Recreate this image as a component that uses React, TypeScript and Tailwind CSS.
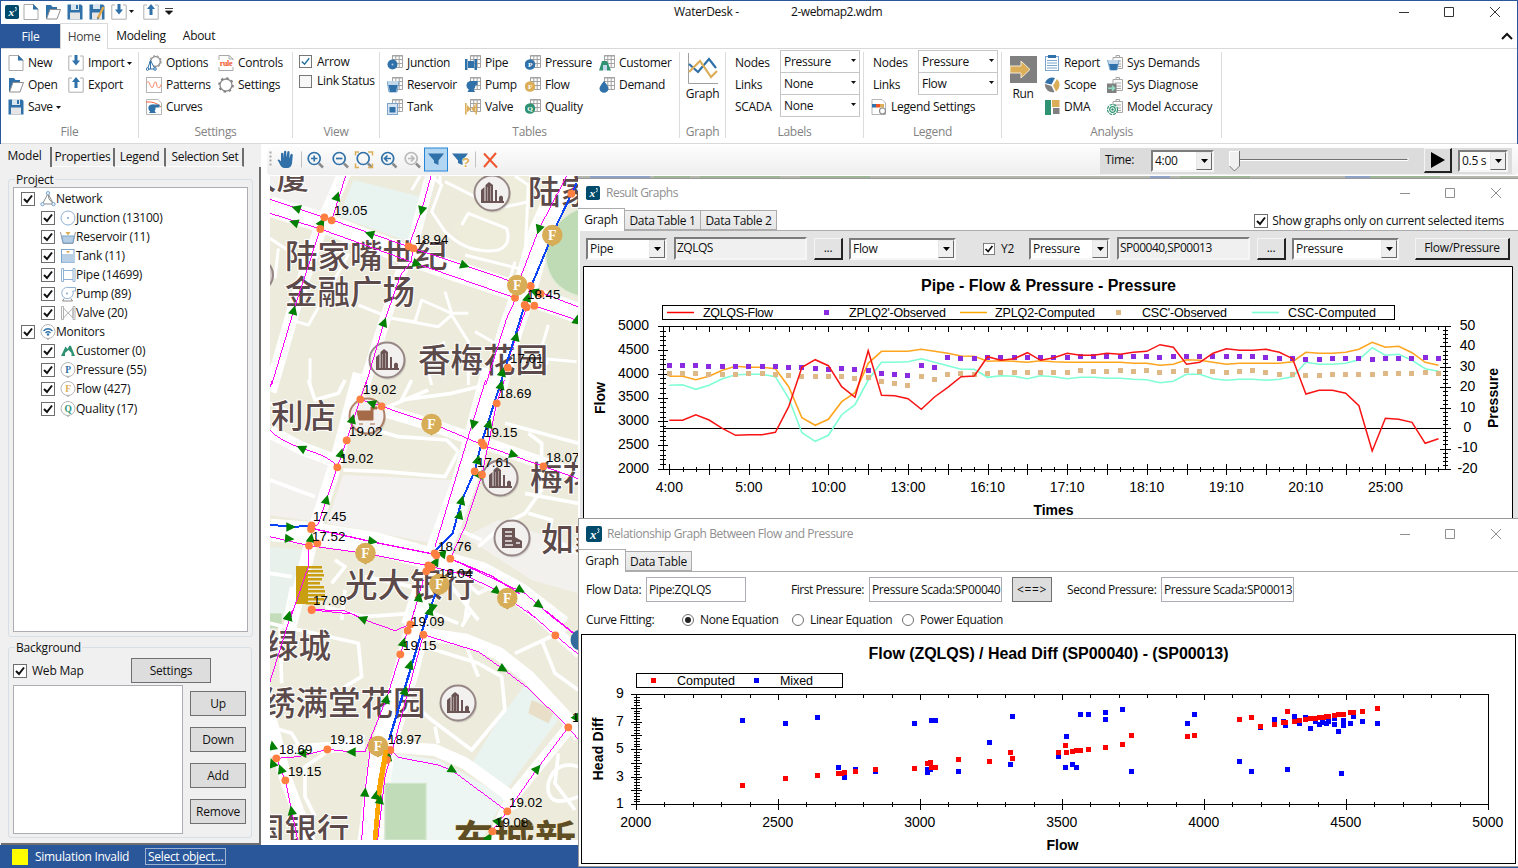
import React from 'react';

type Pt = [number, number];
const BLUE = '#2f71a8';
const GOLD = '#dcae58';
const GREEN = '#2f9272';
const GRAY = '#808080';

/* ---------- icons ---------- */

function Sheet() {
  return (
    <>
      <path d="M1 .5H10.5L15 5V15.5H1Z" fill="#fff" stroke="#a9a9a9" />
      <path d="M10 0L15.5 5.5H10Z" fill={BLUE} />
    </>
  );
}

function GridBack() {
  return <path d="M5.5 .5H15.5V12.5H5.5ZM5.5 4.5H15.5M5.5 8.5H15.5M8.8 .5V12.5M12.2 .5V12.5M5 1H16" fill="none" stroke="#a3a3a3" />;
}

function ClipBack() {
  return <path d="M6 2.5H15.5V13.5H6ZM9 2V.5H12.5V2M8 6H14M8 9H14M8 11.5H14" fill="#fafafa" stroke="#a6a6a6" />;
}

function Letter({ c, fill, color, x = 8, y = 8, r = 7 }: { c: string; fill: string; color: string; x?: number; y?: number; r?: number }) {
  return (
    <>
      <circle cx={x} cy={y} r={r} fill={fill} stroke={fill === '#fff' ? '#b5b5b5' : 'none'} />
      <text x={x} y={y + r * 0.48} fontSize={r * 1.35} textAnchor="middle" fontWeight="bold" fontFamily='"Liberation Serif", serif' fill={color}>
        {c}
      </text>
    </>
  );
}

const ICONS: Record<string, React.ReactNode> = {
  app: (
    <>
      <rect x="0" y="0" width="16" height="16" rx="2" fill="#004b6b" />
      <text x="7" y="12.5" fontSize="13" fontStyle="italic" fontWeight="bold" textAnchor="middle" fontFamily='"Liberation Serif", serif' fill="#fff">x</text>
      <path d="M11.3 3.2Q13 1.8 13.2 3.6Q13 4.5 12.2 4.5Q13.7 5 12.6 6.4L11.2 6.6" fill="none" stroke="#fff" strokeWidth=".9" />
    </>
  ),
  new: <Sheet />,
  open: (
    <>
      <path d="M1 15V1H6L7.5 3H12V6H6L2 15Z" fill={BLUE} />
      <path d="M5 5.5H15.5L12 15H1.5Z" fill="#fff" stroke="#8e8e8e" />
    </>
  ),
  save: (
    <>
      <path d="M.5 .5H14L15.5 2V15.5H.5Z" fill={BLUE} />
      <rect x="4" y="0" width="8" height="6" fill="#dce6ee" />
      <rect x="9" y="1" width="2" height="4" fill={BLUE} />
      <rect x="3" y="8.5" width="10" height="7" fill="#e6e6e6" />
    </>
  ),
  saveas: (
    <>
      <path d="M.5 .5H14L15.5 2V15.5H.5Z" fill={BLUE} />
      <rect x="4" y="0" width="7" height="5" fill="#dce6ee" />
      <rect x="3" y="8.5" width="10" height="7" fill="#e6e6e6" />
      <path d="M14.5 3L9 14" stroke="#e0a84a" strokeWidth="2.4" />
      <path d="M8.6 15.5L8.3 13.2L10 14Z" fill="#444" />
    </>
  ),
  import: (
    <>
      <path d="M4 1H.8V15.2H15.2V1H12" fill="#fff" stroke="#b0b0b0" />
      <path d="M6.5 0H9.5V5.5H12L8 10.5L4 5.5H6.5Z" fill={BLUE} />
    </>
  ),
  export: (
    <>
      <path d="M4 1H.8V15.2H15.2V1H12" fill="#fff" stroke="#b0b0b0" />
      <path d="M6.5 11H9.5V5H12L8 0L4 5H6.5Z" fill={BLUE} />
    </>
  ),
  options: (
    <>
      <circle cx="9.5" cy="6.5" r="4.8" fill="none" stroke="#8b8b8b" strokeWidth="1.3" />
      <circle cx="9.5" cy="6.5" r="5.8" fill="none" stroke="#8b8b8b" strokeDasharray="2 2" />
      <path d="M4.5 5.5L9 14H1.5ZM4.5 5.5V14" fill="#fff" stroke={BLUE} />
      <circle cx="1.5" cy="14" r="1.3" fill="#fff" stroke={BLUE} />
      <circle cx="9" cy="14" r="1.3" fill="#fff" stroke={BLUE} />
    </>
  ),
  gear: (
    <>
      <circle cx="8" cy="8" r="6" fill="none" stroke="#8b8b8b" strokeWidth="1.3" />
      <circle cx="8" cy="8" r="7" fill="none" stroke="#7c7c7c" strokeWidth="1.6" strokeDasharray="2.4 3.1" />
    </>
  ),
  patterns: (
    <>
      <rect x=".5" y=".5" width="15" height="15" fill="#fff" stroke="#b5b5b5" />
      <path d="M.5 6Q2 3 3.500 6Q5 12 7 10Q8.500 4 10 5Q11 11 12.500 11Q14 11 15.500 7" fill="none" stroke="#f58a6c" />
    </>
  ),
  curves: (
    <>
      <path d="M.5 .5H12L15.500 4V15.500H.5Z" fill="#fff" stroke="#b5b5b5" />
      <path d="M0 3Q9 2 15 8" fill="none" stroke="#f0673f" />
      <circle cx="6" cy="9" r="3.600" fill={BLUE} />
      <path d="M6 5.500H13.500V8.500H9ZM3 14L5 11H8L10 14Z" fill={BLUE} />
    </>
  ),
  rule: (
    <>
      <path d="M1 .5H11L15 4V15.500H1Z" fill="#fff" stroke="#a9a9a9" />
      <path d="M11 .5V4H15" fill="none" stroke="#a9a9a9" />
      <rect x="0" y="5" width="16" height="7" fill="#fff" />
      <text x="8" y="11" fontSize="8" fontWeight="bold" textAnchor="middle" fontFamily='"Liberation Serif", serif' fill="#f0552a">rule</text>
    </>
  ),
  tJunction: (<><GridBack /><circle cx="5.500" cy="9.500" r="5" fill={BLUE} /><circle cx="5.500" cy="9.500" r="1" fill="#a9c8e4" /></>),
  tReservoir: (<><GridBack /><path d="M0 4L2 15H10L12 4" fill="#c3d7ea" stroke="#7ba5cc" /><path d="M1.500 8H10.500L9 15H3Z" fill={BLUE} /></>),
  tTank: (<><GridBack /><rect x=".5" y="4.500" width="10" height="11" fill="#d6e3f0" stroke="#7ba5cc" /><rect x="2.500" y="8" width="6" height="5.500" fill={BLUE} /></>),
  tPipe: (<><GridBack /><path d="M0 4H2.500V15H0ZM9.500 4H12V15H9.500ZM3 6H9V13H3Z" fill={BLUE} /></>),
  tPump: (<><GridBack /><circle cx="6" cy="8.500" r="4.500" fill={BLUE} /><path d="M6 4H12.500V8H9ZM2.500 15L4 12H8.500L10 15Z" fill={BLUE} /></>),
  tValve: (<><GridBack /><path d="M.8 4V15.500M11.200 4V15.500" stroke={GOLD} strokeWidth="1.600" /><path d="M2 6L6 10L10 6V13.500L6 10L2 13.500Z" fill={GOLD} /></>),
  tPressure: (<><GridBack /><Letter c="P" fill={BLUE} color="#fff" x={5} y={9.500} r={5.300} /></>),
  tFlow: (<><GridBack /><Letter c="F" fill={GOLD} color="#fff" x={5} y={9.500} r={5.300} /></>),
  tQuality: (<><GridBack /><Letter c="Q" fill={GREEN} color="#fff" x={5} y={9.500} r={5.300} /></>),
  tCustomer: (<><GridBack /><path d="M0 15.500L3 6H8L12 15.500H8V10H4V15.500Z" fill={GREEN} /><rect x="4" y="10" width="4" height="5.500" fill="#c3d7ea" /></>),
  tDemand: (<><GridBack /><path d="M5 4Q0 10 .5 12Q1.500 15.800 5 15.800Q8.500 15.800 9.500 12Q10 10 5 4Z" fill={BLUE} /></>),
  legendset: (
    <>
      <path d="M1 .5H11L14.500 4V15.500H1Z" fill="#fff" stroke="#b5b5b5" />
      <rect x="1" y="5" width="4" height="3.500" fill={BLUE} /><rect x="5" y="5" width="4" height="3.500" fill="#f0552a" /><rect x="9" y="5" width="4" height="3.500" fill={GOLD} />
      <circle cx="11.500" cy="12" r="3" fill="#fff" stroke="#8b8b8b" strokeWidth="1.200" />
    </>
  ),
  report: (
    <>
      <rect x="1.500" y="1.500" width="13" height="14" fill="#fff" stroke="#7ba5cc" />
      <path d="M3 5.500H13M3 8H13M3 10.500H13M3 13H13" stroke="#7ba5cc" />
      <rect x="4" y="0" width="8" height="3" fill={BLUE} />
    </>
  ),
  scope: (
    <>
      <path d="M7.500 7.500L1 6A7.500 7.500 0 0 1 11 1Z" fill={BLUE} />
      <path d="M9 8.500L13 2A8 8 0 0 1 12 14.500Z" fill={GOLD} />
      <path d="M7.500 9L10.500 15A7.500 7.500 0 0 1 1 7Z" fill={GRAY} />
    </>
  ),
  dma: (<><rect x="1" y="1" width="6" height="15" fill={GREEN} /><rect x="8" y="1" width="7.500" height="7" fill={GOLD} /><rect x="9" y="9" width="6.500" height="6" fill={GRAY} /></>),
  sysDem: (<><ClipBack /><path d="M.5 5L3 15H10L12 5" fill="#c3d7ea" stroke="#7ba5cc" /><path d="M2 9H11L9.500 15H3.500Z" fill={BLUE} /></>),
  sysDia: (<><ClipBack /><rect x="0" y="6.500" width="9.500" height="9.500" fill={GRAY} /><path d="M1 11.200H7M5 8.800L7.500 11.200L5 13.600" fill="none" stroke="#8fe0c0" strokeWidth="1.500" /></>),
  accuracy: (<><ClipBack /><circle cx="5.500" cy="10.500" r="5" fill="#fff" stroke={GREEN} strokeWidth="1.200" strokeDasharray="3 1" /><circle cx="5.500" cy="10.500" r="2.800" fill="none" stroke={GREEN} strokeWidth="1.200" /><circle cx="5.500" cy="10.500" r="1.200" fill={GREEN} /></>),
  network: (
    <>
      <path d="M8 2.500L2.500 13H13.500Z" fill="none" stroke="#8b8b8b" />
      <path d="M8 2.500L9 8L13.500 13" fill="none" stroke="#8b8b8b" />
      {[[8, 2.2], [2.5, 13.2], [13.5, 13.2]].map(([x, y]) => <circle key={x} cx={x} cy={y} r="1.700" fill="#e8f0f8" stroke="#7ba5cc" />)}
    </>
  ),
  junction: (<><circle cx="8" cy="8" r="7" fill="#fff" stroke="#8fb2d3" /><circle cx="8" cy="8" r="1" fill="#7ba5cc" /></>),
  reservoir: (<><path d="M.5 3L3 14.500H13L15.500 3" fill="none" stroke="#9a9a9a" /><path d="M1.800 7H14.200L12.800 14H3.200Z" fill="#b3cbe3" stroke="#7ba5cc" /><path d="M5.500 3H10.500L8 6.500Z" fill={GOLD} /></>),
  tank: (<><rect x="1.500" y="1.500" width="12.500" height="13" fill="#fff" stroke="#7ba5cc" /><rect x="2" y="6" width="11.500" height="8.500" fill="#b9cfe6" /><path d="M6 3H10L8 5.500Z" fill={GOLD} /></>),
  pipe: (<path d="M1.500 1.500H3.500V14.500H1.500ZM13 1.500H15V14.500H13ZM3.500 3.500H13M3.500 12.500H13" fill="none" stroke="#8fb2d3" />),
  pump: (<><path d="M9 1.500H15.500V5H12.800A5.700 5.700 0 1 1 9 1.500Z" fill="#fff" stroke="#8fb2d3" /><path d="M4 12.500L2.500 15H12.500L11 12.500" fill="none" stroke="#8b8b8b" /><circle cx="7" cy="7.500" r=".9" fill="#7ba5cc" /></>),
  valve: (<path d="M1.500 1.500H3.500V14.500H1.500ZM13 1.500H15V14.500H13ZM3.500 3L13 13V3L3.500 13Z" fill="none" stroke="#b0b0b0" />),
  monitors: (
    <>
      <path d="M5.500 13.500L8 16L10.500 13.500" fill="#8b8b8b" />
      <circle cx="8" cy="7.500" r="7" fill="#fff" stroke="#b5b5b5" />
      <path d="M3.500 7Q8 2.500 12.500 7M5.500 9Q8 6.500 10.500 9" fill="none" stroke={BLUE} strokeWidth="1.300" /><circle cx="8" cy="10.500" r="1.200" fill={BLUE} />
    </>
  ),
  customer: (<path d="M1 13L5.500 3.500L7.500 6L9.500 2.500L11 3L15 13H11.500V10L8.500 7L5 10V13Z" fill={GREEN} />),
  pressure: (<><path d="M5.500 13.500L8 16L10.500 13.500" fill="#8b8b8b" /><Letter c="P" fill="#fff" color={BLUE} y={7.500} /></>),
  flow: (<><path d="M5.500 13.500L8 16L10.500 13.500" fill="#8b8b8b" /><Letter c="F" fill="#fff" color={GOLD} y={7.500} /></>),
  quality: (<><path d="M5.500 13.500L8 16L10.500 13.500" fill="#8b8b8b" /><Letter c="Q" fill="#fff" color={GREEN} y={7.500} /></>),
};

function Icon({ n, s = 16 }: { n: string; s?: number }) {
  return <svg width={s} height={s} viewBox="0 0 16 16" className="shrink-0">{ICONS[n]}</svg>;
}

function Caret({ c = '' }: { c?: string }) {
  return <svg width="5" height="3" viewBox="0 0 5 3" className={`shrink-0 ${c}`}><path d="M0 0H5L2.500 3Z" fill="#111" /></svg>;
}

function Check({ s = 14, on = true, blue = false }: { s?: number; on?: boolean; blue?: boolean }) {
  return (
    <svg width={s} height={s} viewBox="0 0 14 14" className="shrink-0">
      <rect x=".5" y=".5" width="13" height="13" fill={on ? '#fff' : '#f7f7f7'} stroke="#6e6e6e" />
      {on && <path d="M3 7L6 10L11 3.500" fill="none" stroke={blue ? '#23719c' : '#111'} strokeWidth={blue ? 1.5 : 2} />}
    </svg>
  );
}

/* ---------- ribbon ---------- */

function Cmd({ icon, label, caret }: { icon: string; label: string; caret?: boolean }) {
  return (
    <div className="flex h-[22px] items-center whitespace-nowrap">
      <Icon n={icon} />
      <span className="ml-1">{label}</span>
      {caret && <Caret c="ml-[3px]" />}
    </div>
  );
}

function Group({ label, className, children }: { label: string; className: string; children: React.ReactNode }) {
  return (
    <div className={`flex h-[86px] shrink-0 flex-col justify-between border-r border-[#dcdcdc] ${className}`}>
      <div className="flex h-[66px]">{children}</div>
      <div className="flex h-[12px] items-center justify-center text-[#828282]">{label}</div>
    </div>
  );
}

function Col({ className, items }: { className: string; items: string[][] }) {
  return (
    <div className={`shrink-0 ${className}`}>
      {items.map(([i, l, c]) => <Cmd key={l} icon={i} label={l} caret={!!c} />)}
    </div>
  );
}

function PickList({ values }: { values: string[] }) {
  return (
    <div className="-mt-[2px] w-[80px]">
      {values.map((v, i) => (
        <div key={i} className="-mb-px flex h-[23px] items-center justify-between border border-[#c6c6c6] bg-white pr-[3px] pl-[3px]">
          <span>{v}</span><Caret c="mb-[3px]" />
        </div>
      ))}
    </div>
  );
}

function Names({ names, className }: { names: string[]; className: string }) {
  return <div className={className}>{names.map((n) => <div key={n} className="flex h-[22px] items-center">{n}</div>)}</div>;
}

function Ribbon() {
  return (
    <div className="flex h-[96px] w-full shrink-0 border-t border-b border-[#d9d9d9] pt-[3px]">
      <Group label="File" className="w-[138px]">
        <Col className="w-[61px] pl-[7px]" items={[['new', 'New'], ['open', 'Open'], ['save', 'Save', '1']]} />
        <Col className="w-[70px] pl-[6px]" items={[['import', 'Import', '1'], ['export', 'Export']]} />
      </Group>
      <Group label="Settings" className="w-[154px]">
        <Col className="w-[72px] pl-[7px]" items={[['options', 'Options'], ['patterns', 'Patterns'], ['curves', 'Curves']]} />
        <Col className="pl-[7px]" items={[['rule', 'Controls'], ['gear', 'Settings']]} />
      </Group>
      <Group label="View" className="w-[87px]">
        <div className="pl-[6px]">
          <div className="flex h-[19px] items-center"><Check s={13} blue /><span className="ml-[5px]">Arrow</span></div>
          <div className="flex h-[20px] items-center whitespace-nowrap"><Check s={13} on={false} /><span className="ml-[5px]">Link Status</span></div>
        </div>
      </Group>
      <Group label="Tables" className="w-[300px]">
        <Col className="w-[78px] pl-[7px]" items={[['tJunction', 'Junction'], ['tReservoir', 'Reservoir'], ['tTank', 'Tank']]} />
        <Col className="w-[60px] pl-[7px]" items={[['tPipe', 'Pipe'], ['tPump', 'Pump'], ['tValve', 'Valve']]} />
        <Col className="w-[75px] pl-[7px]" items={[['tPressure', 'Pressure'], ['tFlow', 'Flow'], ['tQuality', 'Quality']]} />
        <Col className="pl-[6px]" items={[['tCustomer', 'Customer'], ['tDemand', 'Demand']]} />
      </Group>
      <Group label="Graph" className="w-[46px]">
        <div className="flex w-full flex-col items-center">
          <svg width="32" height="32" viewBox="0 0 32 32" className="mt-px">
            <path d="M1.500 0V30.500H31" fill="none" stroke="#a0a0a0" />
            <path d="M2 11L11 19L22 6L29 15" fill="none" stroke={BLUE} strokeWidth="2.200" />
            <path d="M2 19L13 8L24 24L30 18" fill="none" stroke={GOLD} strokeWidth="2.200" />
          </svg>
          <span className="mt-px">Graph</span>
        </div>
      </Group>
      <Group label="Labels" className="w-[138px]">
        <Names className="w-[54px] pl-[9px]" names={['Nodes', 'Links', 'SCADA']} />
        <PickList values={['Pressure', 'None', 'None']} />
      </Group>
      <Group label="Legend" className="w-[138px]">
        <div className="flex flex-col">
          <div className="flex h-[44px]">
            <Names className="w-[54px] pl-[9px]" names={['Nodes', 'Links']} />
            <PickList values={['Pressure', 'Flow']} />
          </div>
          <div className="pl-[7px]"><Cmd icon="legendset" label="Legend Settings" /></div>
        </div>
      </Group>
      <Group label="Analysis" className="w-[220px]">
        <div className="flex w-[42px] shrink-0 flex-col items-center pt-[4px]">
          <svg width="27" height="27" viewBox="0 0 27 27">
            <rect width="27" height="27" fill={GRAY} />
            <path d="M0 10H11V5L20 13.500L11 22V17H0Z" fill={GOLD} stroke="#f4ead6" />
          </svg>
          <span className="mt-[3px]">Run</span>
        </div>
        <Col className="w-[63px]" items={[['report', 'Report'], ['scope', 'Scope'], ['dma', 'DMA']]} />
        <Col className="tracking-[-0.2px]" items={[['sysDem', 'Sys Demands'], ['sysDia', 'Sys Diagnose'], ['accuracy', 'Model Accuracy']]} />
      </Group>
    </div>
  );
}

function WinButtons({ color, className }: { color: string; className: string }) {
  return (
    <svg width="104" height="12" viewBox="0 0 104 12" className={className} fill="none" stroke={color}>
      <path d="M1 6.500H11M46.500 1.500H55.500V10.500H46.500ZM92 1L102 11M102 1L92 11" />
    </svg>
  );
}

function TitleArea() {
  return (
    <header className="flex h-[144px] shrink-0 flex-col border-x border-t border-[#2a579a] bg-white">
      <div className="flex h-[22px] shrink-0 items-center">
        <div className="flex w-[673px] shrink-0 items-center pb-px pl-[4px]">
          <Icon n="app" s={14} /><span className="w-[4px]" />
          <Icon n="new" /><span className="w-[6px]" />
          <Icon n="open" /><span className="w-[6px]" />
          <Icon n="save" /><span className="w-[6px]" />
          <Icon n="saveas" /><span className="w-[6px]" />
          <Icon n="import" /><Caret c="ml-[2px]" /><span className="w-[9px]" />
          <Icon n="export" />
          <svg width="8" height="7" viewBox="0 0 8 7" className="ml-[6px]"><path d="M0 .5H8M.5 3H7.500L4 6.500Z" fill="#111" stroke="#111" strokeWidth=".8" /></svg>
        </div>
        <span className="w-[117px] whitespace-nowrap">WaterDesk -</span>
        <span className="whitespace-nowrap tracking-[-0.45px]">2-webmap2.wdm</span>
        <WinButtons color="#333" className="mr-[15px] ml-auto" />
      </div>
      <div className="flex h-[25px] shrink-0 items-end text-[12px]">
        <div className="mt-px flex h-[24px] w-[59px] items-center justify-center self-start bg-[#2a579a] pt-px text-white">File</div>
        <div className="z-10 -mb-px flex h-[26px] w-[48px] items-center justify-center border border-b-0 border-[#d9d9d9] bg-white text-[#444]">Home</div>
        <div className="flex h-[25px] w-[66px] items-center justify-center">Modeling</div>
        <div className="flex h-[25px] w-[50px] items-center justify-center">About</div>
        <svg width="12" height="8" viewBox="0 0 12 8" className="mr-[4px] mb-[8px] ml-auto"><path d="M1 7L6 2L11 7" fill="none" stroke="#111" strokeWidth="2" /></svg>
      </div>
      <Ribbon />
    </header>
  );
}

/* ---------- left panel ---------- */

const TREE: [number, string, string][] = [
  [0, 'network', 'Network'], [1, 'junction', 'Junction (13100)'], [1, 'reservoir', 'Reservoir (11)'], [1, 'tank', 'Tank (11)'],
  [1, 'pipe', 'Pipe (14699)'], [1, 'pump', 'Pump (89)'], [1, 'valve', 'Valve (20)'], [0, 'monitors', 'Monitors'],
  [1, 'customer', 'Customer (0)'], [1, 'pressure', 'Pressure (55)'], [1, 'flow', 'Flow (427)'], [1, 'quality', 'Quality (17)'],
];

function PushButton({ label, className }: { label: string; className: string }) {
  return <button className={`flex h-[25px] items-center justify-center border border-[#707070] bg-[#dddddd] ${className}`}>{label}</button>;
}

function SidePanel() {
  return (
    <aside className="flex h-[701px] w-[261px] shrink-0 flex-col bg-[#f0f0f0] pl-px tracking-[-0.22px]">
      <div className="flex h-[23px] shrink-0 items-end bg-[#f0f0f0]">
        <div className="flex h-[20px] w-[51px] items-start justify-center border-r-2 border-[#6e6e6e] pt-px pr-[2px]">Model</div>
        {[['Properties', 'w-[63px]'], ['Legend', 'w-[51px]'], ['Selection Set', 'w-[78px] pl-[2px] tracking-[-0.35px]']].map(([t, w]) => (
          <div key={t} className={`flex h-[19px] items-center justify-center border-r-2 border-b border-r-[#6e6e6e] border-b-white whitespace-nowrap ${w}`}>{t}</div>
        ))}
      </div>
      <div className="flex flex-1 flex-col border-r-2 border-b-2 border-[#6e6e6e] px-[7px] pt-[5px]">
        <fieldset className="h-[465px] rounded-[3px] border border-[#d5dfe5] px-[4px]">
          <legend className="ml-[2px] h-[15px] px-px leading-[15px]">Project</legend>
          <div className="h-[445px] w-[235px] border border-[#abadb3] bg-white pt-px">
            {TREE.map(([lvl, ic, t]) => (
              <div key={t} className={`flex h-[19.1px] items-center ${lvl ? 'pl-[27px]' : 'pl-[7px]'}`}>
                <Check /><span className="w-[5px]" /><Icon n={ic} /><span className="whitespace-nowrap">{t}</span>
              </div>
            ))}
          </div>
        </fieldset>
        <fieldset className="mt-[3px] h-[198px] rounded-[3px] border border-[#d5dfe5] px-[4px]">
          <legend className="ml-[2px] h-[15px] px-px leading-[15px]">Background</legend>
          <div className="-mt-px flex h-[31px] items-center pt-[2px]">
            <Check /><span className="ml-[5px] w-[99px]">Web Map</span>
            <PushButton label="Settings" className="w-[80px]" />
          </div>
          <div className="flex gap-[7px]">
            <div className="h-[149px] w-[170px] border border-[#abadb3] bg-white" />
            <div className="flex flex-col gap-[11px] pt-[6px]">
              {['Up', 'Down', 'Add', 'Remove'].map((b) => <PushButton key={b} label={b} className="w-[56px]" />)}
            </div>
          </div>
        </fieldset>
      </div>
    </aside>
  );
}

/* ---------- map ---------- */

const arrows: Record<'a' | 'b' | 'c', [number, number, number][]> = {
  a: [[95, 190, 198], [88, 233, 198], [216, 155, -72], [470, 196, 105], [315, 267, 198], [455, 356, 18], [598, 361, 18], [86, 497, -75], [357, 533, -70], [822, 252, 108], [788, 458, -75], [753, 576, -75], [712, 682, -75], [170, 233, -60], [935, 525, -80], [808, 440, 200]],
  b: [[708, 16, -75], [320, 70, 200], [262, 118, -75], [110, 205, 205], [228, 221, -75], [184, 360, -75], [672, 132, -75], [625, 133, 105], [745, 224, 18], [638, 240, -75], [590, 362, -75], [584, 405, -75], [76, 441, 0], [72, 476, 5], [322, 484, 10], [138, 475, -80], [640, 285, 180], [530, 522, 190], [513, 545, -60], [695, 634, 40], [766, 630, 30], [822, 675, 35], [462, 653, -80], [502, 684, 100], [72, 710, -75]],
  c: [[70, 18, -75], [293, 27, 200], [495, 3, -75], [415, 98, -75], [435, 165, -75], [420, 243, -75], [364, 268, -75], [714, 177, 30], [562, 480, 30], [816, 477, -50], [260, 426, 180], [112, 430, 180], [23, 408, -100], [23, 460, -110], [48, 478, -110], [80, 603, -100], [300, 548, -85], [345, 570, -80], [370, 440, -80], [333, 556, -80], [700, 632, -50], [672, 682, -60], [935, 320, -60]],
};

const nodes: Record<'a' | 'b' | 'c', Pt[]> = {
  a: [[178, 217], [200, 226], [166, 252], [431, 304], [445, 310], [919, 146], [797, 423], [827, 446], [750, 458], [779, 480], [785, 487], [808, 482], [728, 668]],
  b: [[286, 58], [350, 79], [245, 181], [217, 262], [695, 70], [650, 187], [656, 196], [629, 274], [651, 284], [835, 259], [140, 436], [138, 447], [157, 490], [132, 497], [509, 520], [514, 526], [556, 536], [490, 556], [500, 562], [484, 574], [140, 688]],
  c: [[140, 0], [436, 43], [428, 62], [475, 74], [406, 133], [871, 76], [910, 352], [187, 418], [34, 445], [61, 511], [376, 420], [366, 450], [727, 604], [682, 664]],
};

const GROUPS: ['a' | 'b' | 'c', number][] = [['a', 145], ['b', 380], ['c', 610]];

const CJK = '"Noto Sans CJK SC", sans-serif';

const places: [string, number, number][] = [
  ['大厦', 244, 189], ['陆家', 528, 204], ['陆家嘴世纪', 285, 268], ['金融广场', 285, 304], ['香梅花园', 418, 372], ['利店', 271, 428],
  ['梅花', 530, 490], ['如家', 541, 551], ['光大银行', 345, 597], ['绿城', 266, 658], ['绣满堂花园', 263, 715], ['国银行', 252, 842],
];

const values: [string, number, number][] = [
  ['19.05', 334, 215], ['18.94', 415, 244], ['18.45', 527, 299], ['17.01', 510, 363], ['19.02', 363, 394], ['18.69', 498, 398], ['19.02', 349, 436],
  ['19.15', 484, 437], ['19.02', 340, 463], ['17.61', 477, 467], ['18.07', 546, 462], ['17.45', 313, 521], ['17.52', 312, 541], ['18.76', 438, 551],
  ['19.04', 439, 578], ['17.09', 313, 605], ['19.09', 411, 626], ['19.15', 403, 650], ['19.18', 330, 744], ['18.97', 388, 744], ['18.69', 279, 754],
  ['19.15', 288, 776], ['19.02', 509, 807], ['19.08', 495, 827], ['1', 572, 722],
];

function Poi({ x, y, kind = 0 }: { x: number; y: number; kind?: number }) {
  const c = kind === 2 ? '#b08068' : '#968786';
  const d = kind === 2 ? '#a56a48' : '#6b5554';
  return (
    <g transform={`translate(${x} ${y})`}>
      <circle r="18" cx="1" cy="1.500" fill="#00000022" />
      <circle r="17.500" fill="#f3f0f0" stroke={c} strokeWidth="2" />
      {kind === 0 && <path d="M-11 9V-3L-7.500 -6V9ZM-6.500 9V-8L-3 -11L1 -8V9ZM3 9V-3H5V9ZM7 9V4Q9 1 11 4V9ZM-11 8H12V10H-11Z" fill={d} />}
      {kind === 0 && <path d="M-4.500 8V-6M-1.500 8V-7" stroke="#b5a6a5" strokeWidth=".8" />}
      {kind === 1 && <path d="M-10 -10H3V-1L10 3V10H-10Z" fill={d} />}
      {kind === 1 && <path d="M-7 -6H0M-7 -2H0M-7 3H0M4 5H8M-7 7H1" stroke="#efeaea" strokeWidth="1.500" />}
      {kind === 2 && <path d="M-10 -5H4V-9H10V-7H6V4H-8ZM-8 8H-4M3 8H8" fill={d} stroke={d} />}
    </g>
  );
}

function MapView() {
  return (
    <svg width="308" height="664" viewBox="270 176 308 664" className="block tracking-normal">
      <rect x="270" y="176" width="308" height="664" fill="#edebdc" />
      <g transform="translate(265 145) scale(.33333)" fill="none" stroke="#fff" strokeLinejoin="round">
        <path d="M15 93H228L190 215L15 165Z" fill="#f2f1f0" stroke="none" />
        <path d="M265 105L468 155L432 290L222 215Z" fill="#e9f3f0" stroke="none" />
        <path d="M720 93H880L770 350L620 330L560 250Z" fill="#eeeddc" stroke="none" />
        <g strokeWidth="12">
          <path d="M500 93L530 120L500 200L540 260Q610 330 700 315Q740 300 725 250L610 205L590 240M440 135L465 93M750 93L790 120L780 340M525 93V118M540 110L640 160L700 190L790 170" strokeWidth="9" />
          <path d="M15 280L90 330M40 310L30 400M120 290L250 330L130 540L60 520M280 480L380 520L450 530L470 465L560 505L540 440M380 520L520 545L560 510L610 590V720M560 505L610 505M630 560L700 600M135 640V720M40 620L20 720M470 640L540 590M500 720L480 640M850 540L820 640L935 650M780 640L850 655M750 350L735 400M600 330L760 370" strokeWidth="9" />
        </g>
        <path d="M15 184L180 235L440 335L760 440L940 505" strokeWidth="62" />
        <path d="M240 80L166 250L90 480L15 740" strokeWidth="40" />
        <path d="M500 80L440 310L405 390L357 533L295 730" strokeWidth="34" />
        <path d="M910 80L828 260L780 430L735 560L685 740" strokeWidth="74" />
        <path d="M945 190Q845 230 842 340Q850 430 945 455Z" fill="#bfdbb5" stroke="#e3ecd9" strokeWidth="5" />
      </g>
      <g transform="translate(265 380) scale(.33333)" fill="none" stroke="#fff" strokeLinejoin="round">
        <path d="M15 165L205 240L150 425L15 405Z" fill="#f3f1ee" stroke="none" />
        <path d="M235 285L560 300L505 490L185 430Z" fill="#f3f2f1" stroke="none" />
        <path d="M15 500L120 510L70 720H15Z" fill="#e9f1ec" stroke="none" />
        <path d="M600 470L700 420L940 500V640L800 600Z" fill="#f3f1ee" stroke="none" />
        <g strokeWidth="11">
          <path d="M370 80L490 30M440 0L410 60L560 40L640 20M300 140L400 170L545 180L580 215L540 290L360 275L235 270M130 0L150 60L220 40L240 0M15 70L60 90M15 300L150 350M720 130L940 190M790 160L830 190V330L780 400L720 430L640 500M780 340L940 370M790 400L860 420L850 460M560 440L650 480M200 610L240 560L210 540M300 590L440 620M560 620L640 720M620 580L600 720M560 570L640 640L720 600M870 480L940 520M240 630L230 720M15 580L80 590" />
          <path d="M80 620L60 720M180 680L300 710L440 700" />
        </g>
        <path d="M15 155L110 205L217 245" strokeWidth="40" />
        <path d="M283 -20L215 240L155 430L135 500L75 740" strokeWidth="40" />
        <path d="M280 60L350 90L500 135L660 190L835 250L945 290" strokeWidth="38" />
        <path d="M15 450L140 460L330 490L510 540L650 580L760 640L890 740" strokeWidth="68" />
        <path d="M688 -30L600 300L510 540L445 740" strokeWidth="76" />
      </g>
      <g transform="translate(265 610) scale(.33333)" fill="none" stroke="#fff" strokeLinejoin="round">
        <path d="M385 430L520 450L720 560L650 690H340Z" fill="#eef6f3" stroke="none" />
        <path d="M780 225L880 330L730 530L615 470L700 330Z" fill="#e9f3ef" stroke="none" />
        <path d="M200 470H300L290 690H150L120 560Z" fill="#ecebdc" stroke="none" />
        <path d="M15 10H50V55H15Z" fill="#c3ddbb" stroke="none" />
        <path d="M800 270L870 300L850 340L790 310Z" fill="#e9dfc8" stroke="none" />
        <g strokeWidth="11">
          <path d="M15 40L60 50L280 100L290 200L240 230M45 50L50 220M15 350L80 370L110 420M420 260L500 330L620 420L720 300L710 200L640 160L480 110M500 430L420 420M590 50L620 0M600 100L640 200M750 130L900 60L790 0M830 90L870 190L940 240M480 0L580 40M110 420L300 380M180 430L120 470V560L150 620M940 470Q870 450 850 520Q840 600 940 560M880 430L870 520L930 600M510 350L520 400" />
        </g>
        <path d="M15 320L60 500L135 700" strokeWidth="38" />
        <path d="M15 425L187 412L300 410" strokeWidth="32" />
        <path d="M475 72L600 90L700 130L790 200L910 330L945 380" strokeWidth="40" />
        <path d="M385 410L510 420L600 460L725 550L745 600" strokeWidth="36" />
        <path d="M915 350L735 570L680 700" strokeWidth="36" />
        <path d="M475 -20L425 180L350 430L315 700" strokeWidth="76" />
        <path d="M360 520H483V690H360Z" fill="#c1dcb9" stroke="#d3e5cd" strokeWidth="4" />
        <path d="M790 -10L945 130" strokeWidth="34" />
      </g>

      <Poi x={492} y={193} /><Poi x={387} y={360} /><Poi x={500} y={478} /><Poi x={512} y={538} kind={1} /><Poi x={458} y={703} /><Poi x={367} y={416} kind={2} />
      <circle cx="257" cy="275" r="16" fill="#d8d0cf" stroke="#968786" strokeWidth="2" />
      <g fill="#c99e10">
        <path d="M296 566H308V604H296Z" />
        {[566, 570, 574, 578, 582, 586, 590, 594, 598, 602].map((y, i) => <rect key={y} x="306" y={y} width={[16, 17, 18, 16, 14, 18, 19, 19, 18, 14][i]} height="2.500" />)}
      </g>
      <g fontFamily={CJK} fontSize="32.500" fontWeight="500" fill="#5b4a49" stroke="#fff" strokeWidth="2" paintOrder="stroke">
        {places.map(([t, x, y]) => <text key={t + y} x={x} y={y}>{t}</text>)}
      </g>
      <text x="453" y="855" fontFamily={CJK} fontSize="41" fontWeight="bold" fill="#5f4e24" stroke="#f5edd0" strokeWidth="1" paintOrder="stroke">东城新</text>

      <g transform="translate(265 145) scale(.33333)" fill="none" stroke="#f0f" strokeWidth="3" shapeRendering="crispEdges">
        <path d="M15 163L178 217L445 310L757 415L940 486M15 205L166 252L455 356L748 458M808 482L940 527M242 93L200 226M178 217L166 252L86 497L20 720M498 93L470 196L431 304L445 310L438 350L407 390L357 533L302 720M905 93L822 252L750 440L748 470L725 520L662 720M930 120L862 270L797 423L785 487L753 576L706 720" />
        <path d="M935 115L875 240L800 420M779 480L705 720" stroke="#0a44f5" strokeWidth="6" />
      </g>
      <g transform="translate(265 380) scale(.33333)" fill="none" stroke="#f0f" strokeWidth="3" shapeRendering="crispEdges">
        <path d="M305 0L286 58L245 181L217 262L160 432L138 447M22 0L15 22M286 58L350 79L500 130L656 196L835 259L940 296M15 150Q40 180 110 205Q200 230 217 262M662 0L610 170L510 500M718 0L695 70L651 284L600 440L556 536M15 470L132 497L300 520L484 556L600 585L697 632L820 720M132 497L130 560L75 720M556 536L650 580L780 640L870 718M475 600L440 720M140 688L240 693L300 718" />
        <path d="M140 445L320 485L509 523M556 536L680 588L765 642" strokeWidth="4" />
        <path d="M710 0L650 187L629 274L590 362L563 460L512 512M512 640L482 720M15 435L90 440L140 438" stroke="#0a44f5" strokeWidth="6" />
      </g>
      <g transform="translate(265 610) scale(.33333)" fill="none" stroke="#f0f" strokeWidth="3" shapeRendering="crispEdges">
        <path d="M82 0L15 215M140 0L260 12L300 30L390 62L436 43L448 0M428 62L406 133L364 268L300 425L262 426L187 418L100 440L34 445L61 511L98 690M320 380L300 548L290 690M475 74L640 125L714 177L790 235L910 352L940 388M910 352L816 477L727 604L660 690M376 420L400 442L520 465L562 482L727 604M785 0L871 76L940 133M475 74L385 410L360 500L338 690" />
        <path d="M838 0L945 85" strokeWidth="5" />
        <path d="M490 0L445 150L372 390" stroke="#0a44f5" strokeWidth="7" />
        <path d="M363 420L345 520L330 690" stroke="#ffa500" strokeWidth="14" />
      </g>
      {GROUPS.map(([k, oy]) => (
        <g key={k}>
          {arrows[k].map(([x, y, r], i) => <path key={i} d="M5.500 0L-4 4.700V-4.700Z" fill="#008000" transform={`translate(${265 + x / 3} ${oy + y / 3}) rotate(${r})`} />)}
          {nodes[k].map(([x, y], i) => <circle key={i} cx={265 + x / 3} cy={oy + y / 3} r="3.900" fill="#ff7f41" />)}
        </g>
      ))}
      <circle cx="581" cy="640" r="10.500" fill="#336a9c" />
      {[[552.3, 235], [517.3, 285], [431.5, 424], [365.5, 553], [439.3, 584], [507.3, 598], [378, 746]].map(([x, y]) => (
        <g key={x}>
          <path d={`M${x - 3} ${y + 9}L${x} ${y + 11.5}L${x + 3} ${y + 9}Z`} fill="#c39a48" />
          <Letter c="F" fill="#d8ad57" color="#fff" x={x} y={y} r={10.3} />
        </g>
      ))}
      <path d="M386 750L384 765L379 795" fill="none" stroke="#ffa500" strokeWidth="4.500" />
      <g fontFamily='"Liberation Sans", sans-serif' fontSize="13.300" fill="#000">
        {values.map(([t, x, y], i) => <text key={i} x={x} y={y}>{t}</text>)}
      </g>
    </svg>
  );
}

function Mag({ sign, color = BLUE, x }: { sign: string; color?: string; x: number }) {
  return (
    <g transform={`translate(${x} 12)`} fill="none" stroke={color} strokeWidth="1.700">
      <path d="M4 4L8 8" stroke="#8b8b8b" strokeWidth="2.500" />
      <circle cx="-.8" cy="-1" r="6" />
      <path d={sign} />
    </g>
  );
}

function MapTools() {
  return (
    <svg width="240" height="28" viewBox="267 147.500 240 28" className="block">
      <g transform="translate(0 148)">
        <path d="M270.500 4V20" stroke="#a8a8a8" strokeWidth="2" strokeDasharray="2 2" />
        <path d="M301.500 4V20M475.500 4V20" stroke="#c2c2c2" />
        <path d="M281 12V6Q282 4.500 283.300 6V11L284 4Q285.200 2.500 286.300 4V10L287.500 4Q288.800 3 289.600 4.500L289.300 11L290.500 7Q292 5.500 292.800 7.500L292 16Q291 20 288 20.500H284Q281 20 279 15L277.500 12.500Q279 11 281 14Z" fill={BLUE} />
        <Mag x={315} sign="M-4 -1H2.400M-.8 -4V2" />
        <Mag x={340} sign="M-4 -1H2.400" />
        <Mag x={364} sign="" />
        <path d="M355.500 8V4.500H359M368 4.500H372.500V8M355.500 16V20H359M368 20H372.500V16" fill="none" stroke={GOLD} strokeWidth="1.500" />
        <Mag x={388.500} sign="M2.500 -1H-3M-1 -4L-4 -1L-1 2" />
        <Mag x={412} sign="M-4 -1H1M-1 -4L2 -1L-1 2" color="#b9b9b9" />
        <rect x="424.500" y=".5" width="23" height="23" fill="#b3d7f3" stroke="#2585d6" />
        <path d="M428 6H444L438.500 13V17.500L434 15.500V13Z" fill={BLUE} />
        <path d="M452 6H468L462.500 13V17.500L458 15.500V13Z" fill={BLUE} />
        <text x="462" y="19" fontSize="13" fontWeight="bold" fill={GOLD} stroke="#fff" strokeWidth="1" paintOrder="stroke" fontFamily='"Liberation Sans", sans-serif'>?</text>
        <path d="M484 6L497 20M496 5.500L484 19.500" stroke="#ee5730" strokeWidth="2" fill="none" />
      </g>
    </svg>
  );
}

/* ---------- classic controls ---------- */

const SUNK = 'border-2 border-t-[#7c7c7c] border-l-[#7c7c7c] border-r-[#f6f6f6] border-b-[#f6f6f6]';
const RAISED = 'border border-b-2 border-r-2 border-t-[#f4f4f4] border-l-[#f4f4f4] border-r-[#222] border-b-[#222]';

function Combo({ v, className }: { v: string; className: string }) {
  return (
    <div className={`flex h-[22px] shrink-0 items-center bg-white pl-[2px] ${SUNK} ${className}`}>
      <span className="flex-1 whitespace-nowrap">{v}</span>
      <span className="flex h-[18px] w-[16px] items-center justify-center border border-t-[#e8e8e8] border-r-[#696969] border-b-[#696969] border-l-[#e8e8e8] bg-[#efefef]">
        <svg width="7" height="4" viewBox="0 0 7 4"><path d="M0 0H7L3.500 4Z" /></svg>
      </span>
    </div>
  );
}

function TimeBar() {
  return (
    <div className="flex h-[26px] w-[412px] items-center bg-[#dcdcdc] pl-[5px]">
      <span className="w-[46px] pb-[2px]">Time:</span>
      <Combo v="4:00" className="w-[63px]" />
      <svg width="200" height="24" viewBox="0 0 200 24" className="ml-[10px]">
        <path d="M14 10.500H184" stroke="#707070" /><path d="M14 11.500H184V9" stroke="#fff" fill="none" />
        <path d="M5.500 2.500H15.500V17L10.500 22L5.500 17Z" fill="#f0f0f0" stroke="#fff" /><path d="M15.500 2V17L10.500 22L5.500 17" fill="none" stroke="#707070" />
      </svg>
      <div className={`flex h-[25px] w-[28px] items-center justify-center bg-[#dcdcdc] ${RAISED}`}>
        <svg width="14" height="16" viewBox="0 0 14 16"><path d="M0 0L14 8L0 16Z" /></svg>
      </div>
      <Combo v="0.5 s" className="ml-[6px] w-[50px]" />
    </div>
  );
}

function Tab({ t, on, className }: { t: string; on?: boolean; className: string }) {
  return (
    <div className={`flex items-center justify-center border border-[#acacac] whitespace-nowrap ${on ? 'z-10 -mb-px h-[23px] border-b-0 bg-white' : '-ml-px h-[20px] bg-gradient-to-b from-[#f0f0f0] to-[#e5e5e5] pt-px'} ${className}`}>{t}</div>
  );
}

/* ---------- charts ---------- */

const X0 = 669.3;
const DX = 13.262;
const flow = [721, 721, 704, 720, 745, 766, 764, 764, 757, 680, 562, 539, 557, 620, 652, 512, 646, 647, 656, 688, 651, 622, 590, 588, 530, 541, 536, 518, 541, 533, 520, 526, 526, 520, 523, 517, 514, 494, 502, 553, 547, 520, 506, 511, 511, 508, 517, 536, 642, 631, 631, 640, 677, 813, 715, 718, 727, 790, 776];
const zplqC = [589, 589, 599, 589, 571, 559, 562, 562, 566, 620, 713, 736, 718, 665, 638, 550, 514, 514, 514, 508, 514, 520, 528, 529, 544, 542, 544, 547, 542, 545, 547, 547, 547, 547, 547, 550, 550, 556, 553, 539, 541, 547, 553, 550, 550, 550, 550, 545, 517, 520, 520, 517, 508, 487, 502, 499, 518, 547, 556];
const cscC = [616, 614, 628, 616, 596, 584, 583, 583, 590, 655, 758, 784, 766, 704, 674, 600, 547, 547, 545, 536, 547, 557, 568, 568, 592, 587, 589, 596, 587, 590, 596, 592, 592, 595, 595, 598, 599, 608, 604, 583, 583, 596, 601, 598, 598, 601, 598, 590, 547, 553, 553, 550, 539, 503, 526, 523, 541, 566, 574];
const zplqO = [557, 557, 557, 560, 560, 560, 560, 560, 560, 563, 563, 565, 569, 565, 568, 572, 580, 583, 586, 557, 563, 532, 535, 535, 532, 532, 532, 532, 532, 532, 532, 529, 529, 529, 529, 529, 529, 532, 529, 529, 529, 529, 529, 529, 529, 532, 535, 535, 538, 538, 535, 535, 535, 538, 535, 535, 535, 532, 535];
const cscO = [580, 580, 580, 583, 583, 583, 580, 580, 584, 586, 589, 589, 589, 589, 595, 592, 604, 610, 616, 589, 598, 583, 580, 583, 580, 577, 577, 577, 577, 577, 577, 571, 574, 574, 571, 574, 571, 577, 574, 571, 574, 574, 577, 574, 571, 577, 583, 583, 586, 586, 583, 583, 583, 583, 580, 580, 580, 577, 580];

const line = (d: number[]) => d.map((y, i) => `${i ? 'L' : 'M'}${(X0 + i * DX).toFixed(1)} ${(180 + y / 3).toFixed(1)}`).join('');
const range = (n: number) => Array.from({ length: n }, (_, i) => i);

function Dots({ d, c }: { d: number[]; c: string }) {
  return <g fill={c} shapeRendering="crispEdges">{d.map((y, i) => <rect key={i} x={Math.round(X0 + i * DX - 2.6)} y={Math.round(180 + y / 3 - 2.5)} width="5" height="5" />)}</g>;
}

function Label({ x, y, t, w, anchor = 'start', size = 14, bold = false }: { x: number; y: number; t: string; w?: number; anchor?: 'start' | 'middle' | 'end'; size?: number; bold?: boolean }) {
  return <text x={x} y={y} fontSize={size} textAnchor={anchor} fontWeight={bold ? 'bold' : 'normal'} textLength={w}>{t}</text>;
}

function FlowChart() {
  const ticks = range(59).map((i) => {
    const x = Math.round(X0 + i * DX) + 0.5;
    const m = i % 3 === 0;
    return `M${x} 326V${m ? 332 : 330}M${x} ${m ? 464 : 467}V${m ? 475 : 472}`;
  }).join('');
  const left = range(31).map((i) => {
    const y = Math.round(326 + i * 4.767) + 0.5;
    return i % 5 ? `M660 ${y}H666` : `M658 ${y}H668`;
  }).join('');
  const right = range(36).map((i) => {
    const y = Math.round(326 + i * 4.086) + 0.5;
    return i % 5 ? `M1443 ${y}H1448` : `M1440 ${y}H1451`;
  }).join('');
  return (
    <svg width="930" height="252" viewBox="583 266 930 252" className="block bg-white tracking-normal" fontFamily='"Liberation Sans", sans-serif'>
      <path d="M583.500 518V266.500H1512.500V518" fill="none" stroke="#000" />
      <Label x={1048.500} y={291} t="Pipe - Flow & Pressure - Pressure" anchor="middle" size={16} bold w={255} />
      <rect x="662.500" y="305.500" width="732" height="14" fill="#fff" stroke="#000" />
      <path d="M667 312.500H694" stroke="red" strokeWidth="1.500" />
      <path d="M960 312.500H987" stroke="orange" strokeWidth="1.500" />
      <path d="M1252 312.500H1279" stroke="#7fffd4" strokeWidth="1.700" />
      <rect x="824" y="310" width="5" height="5" fill="#8a2be2" /><rect x="1116" y="310" width="5" height="5" fill="#deb887" />
      <Label x={703} y={317} t="ZQLQS-Flow" size={12.500} w={70} />
      <Label x={849} y={317} t="ZPLQ2'-Observed" size={12.500} w={97} />
      <Label x={995} y={317} t="ZPLQ2-Computed" size={12.500} w={100} />
      <Label x={1142} y={317} t="CSC'-Observed" size={12.500} w={85} />
      <Label x={1288} y={317} t="CSC-Computed" size={12.500} w={88} />
      <path d={`M658 326.500H1451M658 469.500H1451M663.500 326V470M1445.500 326V470M663 428.500H1446${ticks}${left}${right}`} fill="none" stroke="#000" shapeRendering="crispEdges" />
      <path d={line(cscC)} fill="none" stroke="#7fffd4" strokeWidth="1.600" />
      <path d={line(zplqC)} fill="none" stroke="#ffa51f" strokeWidth="1.600" />
      <Dots d={cscO} c="#deb887" />
      <Dots d={zplqO} c="#8a2be2" />
      <path d={line(flow)} fill="none" stroke="#f91414" strokeWidth="1.500" />
      {range(7).map((i) => <Label key={i} x={649} y={330 + i * 23.83} t={String(5000 - i * 500)} anchor="end" w={31} />)}
      {range(8).map((i) => <Label key={i} x={1467.500} y={330 + i * 20.4} t={String(50 - i * 10)} anchor="middle" size={14} />)}
      {['4:00', '5:00', '10:00', '13:00', '16:10', '17:10', '18:10', '19:10', '20:10', '25:00'].map((t, i) => <Label key={t} x={669.3 + i * 79.57} y={492} t={t} anchor="middle" />)}
      <Label x={1053.500} y={515} t="Times" anchor="middle" size={14} bold />
      <text transform="translate(605 398) rotate(-90)" fontSize="14" fontWeight="bold" textAnchor="middle">Flow</text>
      <text transform="translate(1498 398) rotate(-90)" fontSize="14" fontWeight="bold" textAnchor="middle" textLength="60">Pressure</text>
    </svg>
  );
}

const blueL: Pt[] = [[493, 607], [622, 616], [718, 598], [781, 748], [799, 778], [832, 754], [892, 760], [1009, 616], [1060, 607], [1072, 607], [1048, 754], [1048, 763], [1057, 754], [1141, 760], [1234, 673], [1303, 595], [1297, 739]];
const redL: Pt[] = [[493, 802], [622, 781], [718, 772], [781, 766], [790, 765], [799, 763], [832, 760], [892, 754], [1009, 751], [1048, 736], [1057, 733], [1060, 748], [1072, 748], [1141, 724], [1234, 730], [1297, 703], [1303, 721]];
const blueR: Pt[] = [[55, 715], [79, 655], [76, 748], [97, 739], [109, 748], [121, 589], [145, 589], [196, 583], [196, 604], [247, 574], [274, 760], [442, 616], [463, 589], [598, 730], [634, 760], [661, 628], [703, 604], [730, 610], [736, 622], [742, 754], [763, 595], [778, 616], [796, 598], [811, 631], [826, 610], [838, 619], [847, 613], [858, 616], [865, 611], [883, 600], [883, 619], [895, 640], [904, 766], [910, 607], [910, 622], [931, 616], [940, 595], [967, 610], [1012, 616]];
const redR: Pt[] = [[55, 703], [76, 682], [79, 703], [97, 700], [109, 697], [121, 697], [145, 694], [196, 688], [247, 679], [274, 652], [442, 655], [463, 652], [598, 604], [634, 598], [661, 625], [703, 619], [730, 613], [736, 613], [742, 580], [763, 610], [778, 607], [796, 604], [811, 601], [826, 601], [838, 598], [850, 598], [858, 595], [865, 595], [883, 592], [895, 589], [910, 588], [931, 583], [940, 583], [967, 580], [1012, 571]];

function Scatter({ d, ox, c }: { d: Pt[]; ox: number; c: string }) {
  return <g fill={c} shapeRendering="crispEdges">{d.map(([x, y], i) => <rect key={i} x={Math.round(ox + x / 3 - 2.5)} y={Math.round(518 + y / 3 - 2.5)} width="5" height="5" />)}</g>;
}

function RelationChart() {
  const bottom = range(31).map((i) => {
    const x = Math.round(636 + i * 28.4) + 0.5;
    const m = i % 5 === 0;
    return `M${x} 694V${m ? 700 : 698}M${x} ${m ? 799 : 802}V${m ? 810 : 807}`;
  }).join('');
  const left = range(41).map((i) => {
    const y = Math.round(694 + i * 2.75) + 0.5;
    return i % 5 ? `M634 ${y}H640` : `M631 ${y}H642`;
  }).join('');
  return (
    <svg width="935" height="230" viewBox="581 634 935 230" className="block bg-white tracking-normal" fontFamily='"Liberation Sans", sans-serif'>
      <rect x="581.500" y="634.500" width="934" height="229" fill="none" stroke="#000" />
      <Label x={1048.500} y={659} t="Flow (ZQLQS) / Head Diff (SP00040) - (SP00013)" anchor="middle" size={16} bold w={360} />
      <rect x="636.500" y="673.500" width="206" height="14" fill="#fff" stroke="#000" />
      <rect x="651" y="678" width="5" height="5" fill="red" /><rect x="754" y="678" width="5" height="5" fill="blue" />
      <Label x={677} y={685} t="Computed" size={12.500} w={58} /><Label x={780} y={685} t="Mixed" size={12.500} w={33} />
      <path d={`M631 694.500H1488.500V810M631 804.500H1488M636.500 694V805${bottom}${left}`} fill="none" stroke="#000" shapeRendering="crispEdges" />
      <Scatter d={blueL} ox={578} c="blue" /><Scatter d={blueR} ox={1040} c="blue" />
      <Scatter d={redL} ox={578} c="red" /><Scatter d={redR} ox={1040} c="red" />
      {[9, 7, 5, 3, 1].map((v, i) => <Label key={v} x={620} y={698 + i * 27.6} t={String(v)} anchor="middle" />)}
      {range(7).map((i) => <Label key={i} x={635.800 + i * 142} y={827} t={String(2000 + i * 500)} anchor="middle" />)}
      <Label x={1062.500} y={850} t="Flow" anchor="middle" size={14} bold />
      <text transform="translate(603 749) rotate(-90)" fontSize="14" fontWeight="bold" textAnchor="middle" textLength="63">Head Diff</text>
    </svg>
  );
}

/* ---------- floating windows ---------- */

function Field({ v, className }: { v: string; className: string }) {
  return <div className={`flex h-[23px] shrink-0 items-center bg-[#f0f0f0] pb-px pl-px tracking-[-0.5px] ${SUNK} ${className}`}>{v}</div>;
}

function Dots3() {
  return <div className={`ml-[7px] flex h-[22px] w-[29px] shrink-0 items-center justify-center bg-[#e3e3e3] ${RAISED}`}>...</div>;
}

function ResultWindow() {
  return (
    <section className="absolute top-[178px] left-[578px] flex h-[340px] w-[940px] flex-col border-t border-[#9a9a9a] bg-white">
      <div className="flex h-[29px] shrink-0 items-center pb-[2px] pl-[8px] text-[#8f8f8f]">
        <Icon n="app" s={14} /><span className="ml-[6px] tracking-[-0.5px]">Result Graphs</span>
        <WinButtons color="#8f8f8f" className="mr-[15px] ml-auto" />
      </div>
      <div className="flex h-[23px] shrink-0 items-end border-b border-[#acacac]">
        <Tab t="Graph" on className="w-[47px] border-l-0" />
        <Tab t="Data Table 1" className="w-[77px]" />
        <Tab t="Data Table 2" className="w-[77px]" />
        <div className="mr-[14px] ml-auto flex items-center gap-[4px] pb-px"><Check /><span>Show graphs only on current selected items</span></div>
      </div>
      <div className="ml-[2px] flex h-[35px] shrink-0 items-center bg-[#e3e3e3] pl-[6px]">
        <Combo v="Pipe" className="w-[81px]" />
        <Field v="ZQLQS" className="ml-[7px] w-[133px]" />
        <Dots3 />
        <Combo v="Flow" className="ml-[6px] w-[107px]" />
        <span className="w-[27px]" /><Check s={12} /><span className="ml-[6px] w-[28px]">Y2</span>
        <Combo v="Pressure" className="w-[81px]" />
        <Field v="SP00040,SP00013" className="ml-[7px] w-[133px]" />
        <Dots3 />
        <Combo v="Pressure" className="ml-[6px] w-[107px]" />
        <div className={`ml-[16px] flex h-[22px] w-[95px] items-center justify-center bg-[#e3e3e3] ${RAISED}`}>Flow/Pressure</div>
      </div>
      <div className="ml-[2px] flex-1 bg-[#e3e3e3] pl-[3px]"><FlowChart /></div>
    </section>
  );
}

function Box({ v, className }: { v: string; className: string }) {
  return <div className={`flex h-[25px] shrink-0 items-center border border-[#abadb3] bg-white pl-[2px] tracking-[-0.38px] whitespace-nowrap ${className}`}>{v}</div>;
}

function Radio({ t, on, className }: { t: string; on?: boolean; className: string }) {
  return (
    <label className={`flex items-center gap-[6px] whitespace-nowrap ${className}`}>
      <svg width="12" height="12" viewBox="0 0 12 12"><circle cx="6" cy="6" r="5.500" fill="#fff" stroke="#707070" />{on && <circle cx="6" cy="6" r="3" fill="#222" />}</svg>
      {t}
    </label>
  );
}

function RelationWindow() {
  return (
    <section className="absolute top-[518px] left-[578px] flex h-[349px] w-[940px] flex-col border-t border-b border-l border-[#9a9a9a] bg-white">
      <div className="flex h-[30px] shrink-0 items-center pl-[7px] text-[#8f8f8f]">
        <Icon n="app" /><span className="ml-[5px] tracking-[-0.43px]">Relationship Graph Between Flow and Pressure</span>
        <WinButtons color="#8f8f8f" className="mr-[15px] ml-auto" />
      </div>
      <div className="flex h-[23px] shrink-0 items-end border-b border-[#acacac]">
        <Tab t="Graph" on className="w-[47px] border-l-0" />
        <Tab t="Data Table" className="w-[67px]" />
      </div>
      <div className="mt-[5px] flex h-[25px] shrink-0 items-center pl-[7px]">
        <span className="w-[60px]">Flow Data:</span><Box v="Pipe:ZQLQS" className="w-[100px]" />
        <span className="ml-[45px] w-[78px] tracking-[-0.45px] whitespace-nowrap">First Pressure:</span><Box v="Pressure Scada:SP00040" className="w-[133px]" />
        <PushButton label="<==>" className="ml-[10px] w-[40px] tracking-[0.7px]" />
        <span className="ml-[15px] w-[94px] tracking-[-0.45px] whitespace-nowrap">Second Pressure:</span><Box v="Pressure Scada:SP00013" className="w-[133px]" />
      </div>
      <div className="mt-[5px] flex h-[25px] shrink-0 items-center pl-[7px] tracking-[-0.38px]">
        <span className="w-[96px] whitespace-nowrap">Curve Fitting:</span>
        <Radio t="None Equation" on className="w-[110px]" />
        <Radio t="Linear Equation" className="w-[110px]" />
        <Radio t="Power Equation" className="w-[110px]" />
      </div>
      <div className="mt-[2px] ml-[2px]"><RelationChart /></div>
    </section>
  );
}

export default function App() {
  return (
    <div className='relative flex h-[868px] w-[1518px] flex-col overflow-hidden bg-white font-["Open_Sans",sans-serif] text-[12px] leading-[16px] tracking-[-0.3px] text-[#111]'>
      <TitleArea />
      <main className="flex h-[701px] shrink-0">
        <SidePanel />
        <div className="flex flex-1 flex-col pl-[6px]">
          <div className="mt-[2px] flex h-[29px] shrink-0 items-center justify-between rounded-sm bg-gradient-to-b from-[#fdfdfd] to-[#eeeeee] pr-[6px]">
            <MapTools />
            <TimeBar />
          </div>
          <div className="ml-[3px] flex pt-px">
            <MapView />
            <svg width="940" height="3" viewBox="578 176 940 3"><path d="M578 177H1518" stroke="#b4b8ac" strokeWidth="3" /><path d="M654 177H690M700 177H780M800 177H870M1180 177H1250M1370 177H1440" stroke="#9cb594" strokeWidth="3" /><path d="M590 177H650M1150 177H1170M1345 177H1370" stroke="#8da2c4" strokeWidth="3" /></svg>
          </div>
        </div>
      </main>
      <footer className="flex h-[23px] shrink-0 items-center bg-[#2a579a] pl-[12px] text-white">
        <span className="h-[16px] w-[16px] bg-[#ffff00]" />
        <span className="ml-[7px] w-[110px]">Simulation Invalid</span>
        <span className="flex h-[17px] w-[81px] items-center border border-[#9db1d3] pl-[2px] whitespace-nowrap">Select object...</span>
      </footer>
      <ResultWindow />
      <RelationWindow />
    </div>
  );
}
